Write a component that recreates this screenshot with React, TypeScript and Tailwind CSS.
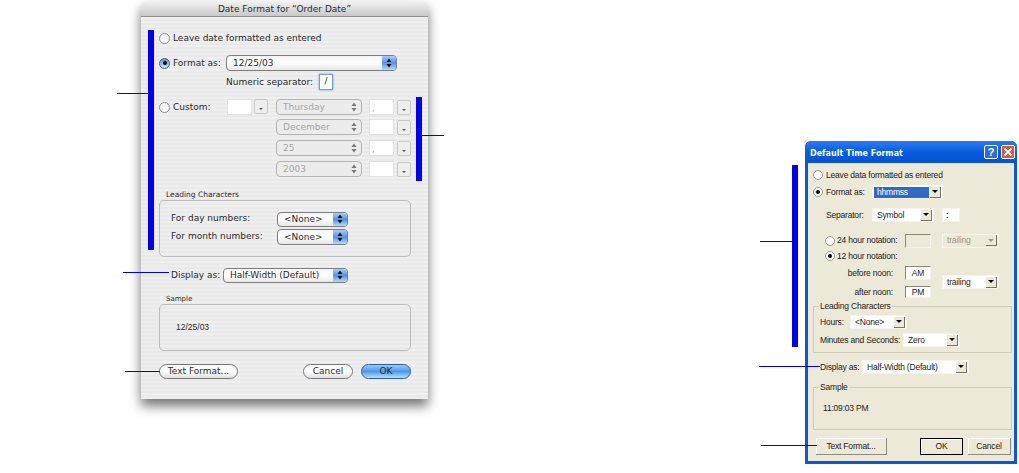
import React from "react";

const macFont = "font-['DejaVu_Sans',sans-serif] text-[9px] whitespace-nowrap text-[#2a2a2a]";
const winFont = "font-['Liberation_Sans',Arial,sans-serif] text-[8.5px] tracking-[-0.2px] whitespace-nowrap text-[#222]";

const MacRadio = ({ on = false }: { on?: boolean }) => (
  <span
    className={`flex h-[11px] w-[11px] shrink-0 items-center justify-center rounded-full border ${
      on
        ? "border-[#3f5f8f] bg-gradient-to-b from-[#5f97d8] to-[#cfe6fb]"
        : "border-[#8a8a8a] bg-gradient-to-b from-[#f0f0f0] to-white"
    }`}
  >
    {on && <span className="h-[4px] w-[4px] rounded-full bg-black" />}
  </span>
);

const Updown = ({ color = "#111" }: { color?: string }) => (
  <svg width="6" height="10" viewBox="0 0 6 10">
    <path d="M3 0.5 L5.5 4 H0.5 Z M3 9.5 L5.5 6 H0.5 Z" fill={color} />
  </svg>
);

const MacPopup = ({ label, className }: { label: string; className: string }) => (
  <div
    className={`flex items-center justify-between overflow-hidden rounded-[4px] border border-[#7f7f7f] bg-gradient-to-b from-[#f4f4f4] via-white to-[#e6e6e6] ${className}`}
  >
    <span className="pl-[6px] pt-[2px]">{label}</span>
    <span className="flex h-full w-[14px] shrink-0 items-center justify-center bg-gradient-to-b from-[#a9cdf5] via-[#4f93e6] to-[#b6dafb]">
      <Updown />
    </span>
  </div>
);

const MacDisabledPopup = ({ label }: { label: string }) => (
  <div className="flex h-[16px] w-[86px] items-center justify-between rounded-[4px] border border-[#b4b4b4] bg-[#ececec] text-[#a4a4a4]">
    <span className="pl-[6px] pt-[2px]">{label}</span>
    <span className="flex h-full w-[14px] items-center justify-center">
      <Updown color="#777" />
    </span>
  </div>
);

const MacBlankField = ({ text = "" }: { text?: string }) => (
  <div className="flex h-[16px] w-[25px] items-end border border-[#e2e2e2] bg-white pb-[1px] pl-[2px] text-[8px] leading-[8px] text-[#999]">
    {text}
  </div>
);

const MacSmallDrop = () => (
  <div className="flex h-[15px] w-[14px] items-end justify-center rounded-[2px] border border-[#c8c8c8] bg-[#eeeeee] pb-[3px]">
    <span className="h-0 w-0 border-x-[2px] border-t-[2px] border-x-transparent border-t-[#555]" />
  </div>
);

const MacButton = ({ label, className, def = false }: { label: string; className: string; def?: boolean }) => (
  <div
    className={`flex h-[15px] items-center justify-center rounded-full border ${
      def
        ? "border-[#2f5f9f] bg-gradient-to-b from-[#9cc8f4] via-[#4a97ea] to-[#b8e2fd]"
        : "border-[#777] bg-gradient-to-b from-[#f8f8f8] via-white to-[#dfdfdf]"
    } ${className}`}
  >
    {label}
  </div>
);

const CustomRow = ({ label, comma = false, top }: { label: string; comma?: boolean; top: string }) => (
  <div className={`flex h-[16px] items-center ${top}`}>
    <MacDisabledPopup label={label} />
    <div className="ml-[7px]">
      <MacBlankField text={comma ? "," : ""} />
    </div>
    <div className="ml-[3px]">
      <MacSmallDrop />
    </div>
  </div>
);

const MacDialog = () => (
  <div
    className={`absolute left-[141px] top-[1px] h-[398px] w-[287px] overflow-hidden rounded-t-[5px] shadow-[0_7px_12px_rgba(0,0,0,0.55)] ${macFont}`}
  >
    <div className="flex h-[16px] items-center justify-center border-b border-[#8f8f8f] bg-gradient-to-b from-[#f2f2f2] to-[#c9c9c9] pt-[2px]">
      Date Format for “Order Date”
    </div>
    <div className="h-[382px] bg-[repeating-linear-gradient(0deg,#efefef_0px,#efefef_2px,#e9e9e9_2px,#e9e9e9_4px)] pl-[18px] pt-[13px]">
      <div className="flex h-[16px] items-center gap-[3px]">
        <MacRadio />
        <span className="pt-[2px]">Leave date formatted as entered</span>
      </div>
      <div className="mt-[9px] flex h-[16px] items-center gap-[3px]">
        <MacRadio on />
        <span className="w-[50px] pt-[2px]">Format as:</span>
        <MacPopup label="12/25/03" className="h-[16px] w-[171px]" />
      </div>
      <div className="mt-[3px] flex h-[16px] items-center pl-[67px]">
        <span className="w-[93px] pt-[2px]">Numeric separator:</span>
        <div className="flex h-[16px] w-[14px] items-center justify-center border border-[#6f9ed8] bg-white shadow-[0_0_2px_#5b9be8]">
          /
        </div>
      </div>
      <div className="mt-[9px] flex">
        <div className="flex h-[16px] w-[68px] items-center gap-[3px]">
          <MacRadio />
          <span className="pt-[2px]">Custom:</span>
        </div>
        <MacBlankField />
        <div className="ml-[2px]">
          <MacSmallDrop />
        </div>
        <div className="ml-[8px]">
          <CustomRow label="Thursday" comma top="" />
          <CustomRow label="December" top="mt-[4px]" />
          <CustomRow label="25" comma top="mt-[5px]" />
          <CustomRow label="2003" top="mt-[5px]" />
        </div>
      </div>
      <div className="mt-[12px] h-[11px] pl-[7px] text-[7.5px] leading-[11px]">Leading Characters</div>
      <div className="h-[57px] w-[252px] rounded-[5px] border border-[#bcbcbc] pl-[11px] pt-[10px]">
        <div className="flex h-[16px] items-center">
          <span className="w-[106px]">For day numbers:</span>
          <MacPopup label="<None>" className="h-[15px] w-[71px]" />
        </div>
        <div className="mt-[2px] flex h-[16px] items-center">
          <span className="w-[106px]">For month numbers:</span>
          <MacPopup label="<None>" className="h-[16px] w-[71px]" />
        </div>
      </div>
      <div className="mt-[10px] flex h-[16px] items-center pl-[12px]">
        <span className="w-[52px] pt-[1px]">Display as:</span>
        <MacPopup label="Half-Width (Default)" className="h-[15px] w-[125px]" />
      </div>
      <div className="mt-[11px] h-[10px] pl-[7px] text-[7px] leading-[10px]">Sample</div>
      <div className="flex h-[47px] w-[252px] items-center rounded-[5px] border border-[#bcbcbc] pl-[16px] font-['Liberation_Sans',sans-serif] text-[8.5px]">
        12/25/03
      </div>
      <div className="mt-[13px] flex w-[252px] items-center">
        <MacButton label="Text Format..." className="w-[79px]" />
        <MacButton label="Cancel" className="ml-[65px] w-[50px]" />
        <MacButton label="OK" className="ml-[8px] w-[50px]" def />
      </div>
    </div>
  </div>
);

const WinRadio = ({ on = false }: { on?: boolean }) => (
  <span className="flex h-[10px] w-[10px] shrink-0 items-center justify-center rounded-full border border-[#9a9a90] bg-white">
    {on && <span className="h-[4px] w-[4px] rounded-full bg-black" />}
  </span>
);

const WinSelect = ({
  label,
  className,
  selected = false,
  disabled = false,
}: {
  label: string;
  className: string;
  selected?: boolean;
  disabled?: boolean;
}) => (
  <div
    className={`flex h-[14px] items-center border border-[#f6f4ec] pr-[1px] ${disabled ? "bg-[#ece9d8] text-[#9a9a90]" : "bg-white"} ${className}`}
  >
    <span className={`ml-[1px] flex h-[11px] flex-1 items-center pl-[3px] leading-none ${selected ? "bg-[#316ac5] text-white" : ""}`}>
      {label}
    </span>
    <span className="ml-[1px] flex h-[11px] w-[11px] items-center justify-center border-b border-r border-[#77756a] bg-[#ece9d8]">
      <span className={`h-0 w-0 border-x-[3px] border-t-[3px] border-x-transparent ${disabled ? "border-t-[#9a9a90]" : "border-t-black"}`} />
    </span>
  </div>
);

const WinField = ({ text = "", className = "", disabled = false }: { text?: string; className?: string; disabled?: boolean }) => (
  <div
    className={`flex h-[14px] w-[26px] items-center justify-center border border-b-[#f6f4ec] border-l-[#8a8878] border-r-[#f6f4ec] border-t-[#8a8878] ${disabled ? "bg-[#ece9d8]" : "bg-white"} ${className}`}
  >
    {text}
  </div>
);

const WinButton = ({ label, className, def = false }: { label: string; className: string; def?: boolean }) => (
  <div
    className={`flex h-[17px] items-center justify-center ${
      def ? "border border-black" : "border-b border-r border-[#8d8b7c]"
    } bg-[#ece9d8] shadow-[inset_1px_1px_0_#fff] ${className}`}
  >
    {label}
  </div>
);

const WinGroup = ({ title, className, children }: { title: string; className: string; children?: React.ReactNode }) => (
  <div className={`relative w-[199px] border border-[#cfccba] ${className}`}>
    <span className="absolute left-[5px] top-[-6px] bg-[#ece9d8] px-[1px] leading-[11px]">{title}</span>
    {children}
  </div>
);

const WinDialog = () => (
  <div className={`absolute left-[805px] top-[141px] h-[323px] w-[212px] overflow-hidden rounded-t-[6px] bg-[#0a57d8] ${winFont}`}>
    <div className="flex h-[22px] items-center justify-between bg-gradient-to-b from-[#2a7cf0] via-[#0a5be0] to-[#0654d2] pl-[5px] pr-[2px]">
      <span className="pt-[3px] font-['DejaVu_Sans',sans-serif] text-[8px] font-bold tracking-normal text-white">Default Time Format</span>
      <div className="flex gap-[3px]">
        <span className="flex h-[14px] w-[14px] items-center justify-center rounded-[2px] border border-white bg-[#2f6be0] text-[11px] font-bold leading-none text-white">
          ?
        </span>
        <span className="flex h-[14px] w-[14px] items-center justify-center rounded-[2px] border border-white bg-[#d9553a]">
          <svg width="10" height="10" viewBox="0 0 10 10">
            <path d="M1.5 1.5 L8.5 8.5 M8.5 1.5 L1.5 8.5" stroke="#fff" strokeWidth="2" />
          </svg>
        </span>
      </div>
    </div>
    <div className="ml-[3px] h-[298px] w-[206px] bg-[#ece9d8] pl-[5px] pt-[6px]">
      <div className="flex h-[12px] items-center gap-[3px]">
        <WinRadio />
        <span>Leave data formatted as entered</span>
      </div>
      <div className="mt-[4px] flex h-[14px] items-center gap-[3px]">
        <WinRadio on />
        <span className="w-[43px]">Format as:</span>
        <WinSelect label="hhmmss" selected className="w-[71px]" />
      </div>
      <div className="mt-[9px] flex h-[14px] items-center pl-[13px]">
        <span className="w-[46px]">Separator:</span>
        <WinSelect label="Symbol" className="w-[62px]" />
        <div className="ml-[8px] flex h-[14px] w-[18px] items-center border border-[#f6f4ec] bg-white pl-[3px]">:</div>
      </div>
      <div className="mt-[11px] flex h-[15px] items-center pl-[12px]">
        <WinRadio />
        <span className="ml-[2px] w-[68px]">24 hour notation:</span>
        <WinField disabled />
        <WinSelect label="trailing" disabled className="ml-[11px] w-[57px]" />
      </div>
      <div className="mt-[1px] flex h-[14px] items-center pl-[12px]">
        <WinRadio on />
        <span className="ml-[2px]">12 hour notation:</span>
      </div>
      <div className="flex">
        <div className="w-[118px]">
          <div className="mt-[3px] flex h-[14px] items-center justify-end">
            <span className="mr-[12px]">before noon:</span>
            <WinField text="AM" />
          </div>
          <div className="mt-[6px] flex h-[12px] items-center justify-end">
            <span className="mr-[12px]">after noon:</span>
            <WinField text="PM" className="!h-[12px]" />
          </div>
        </div>
        <WinSelect label="trailing" className="ml-[11px] mt-[12px] w-[57px]" />
      </div>
      <WinGroup title="Leading Characters" className="mt-[8px] h-[47px]">
        <div className="mt-[8px] flex h-[14px] items-center pl-[6px]">
          <span className="w-[30px]">Hours:</span>
          <WinSelect label="<None>" className="w-[57px]" />
        </div>
        <div className="mt-[4px] flex h-[14px] items-center pl-[6px]">
          <span className="w-[83px]">Minutes and Seconds:</span>
          <WinSelect label="Zero" className="w-[57px]" />
        </div>
      </WinGroup>
      <div className="mt-[7px] flex h-[14px] items-center pl-[7px]">
        <span className="w-[42px]">Display as:</span>
        <WinSelect label="Half-Width (Default)" className="w-[107px]" />
      </div>
      <WinGroup title="Sample" className="mt-[13px] flex h-[43px] items-center pl-[9px]">
        11:09:03 PM
      </WinGroup>
      <div className="mt-[8px] flex items-center pl-[3px]">
        <WinButton label="Text Format..." className="w-[71px]" />
        <WinButton label="OK" def className="ml-[33px] w-[43px]" />
        <WinButton label="Cancel" className="ml-[5px] w-[43px]" />
      </div>
    </div>
  </div>
);

// blue markers that sit over the screenshots
const bars = [
  "left-[148px] top-[30px] h-[220px] w-[6px]",
  "left-[416px] top-[97px] h-[84px] w-[6px]",
  "left-[792px] top-[165px] h-[182px] w-[6px]",
];
const lines = [
  "left-[117px] top-[93px] w-[31px]",
  "left-[422px] top-[135px] w-[22px]",
  "left-[123px] top-[272px] w-[46px]",
  "left-[125px] top-[371px] w-[35px]",
  "left-[760px] top-[241px] w-[32px]",
  "left-[759px] top-[366px] w-[61px]",
  "left-[761px] top-[445px] w-[56px]",
];

export default function App() {
  return (
    <div className="relative h-[473px] w-[1019px] overflow-hidden bg-white">
      <MacDialog />
      <WinDialog />
      {bars.map((c) => (
        <div key={c} className={`absolute bg-[#0000f0] ${c}`} />
      ))}
      {lines.map((c) => (
        <div key={c} className={`absolute h-px bg-[#0000e0] ${c}`} />
      ))}
    </div>
  );
}
